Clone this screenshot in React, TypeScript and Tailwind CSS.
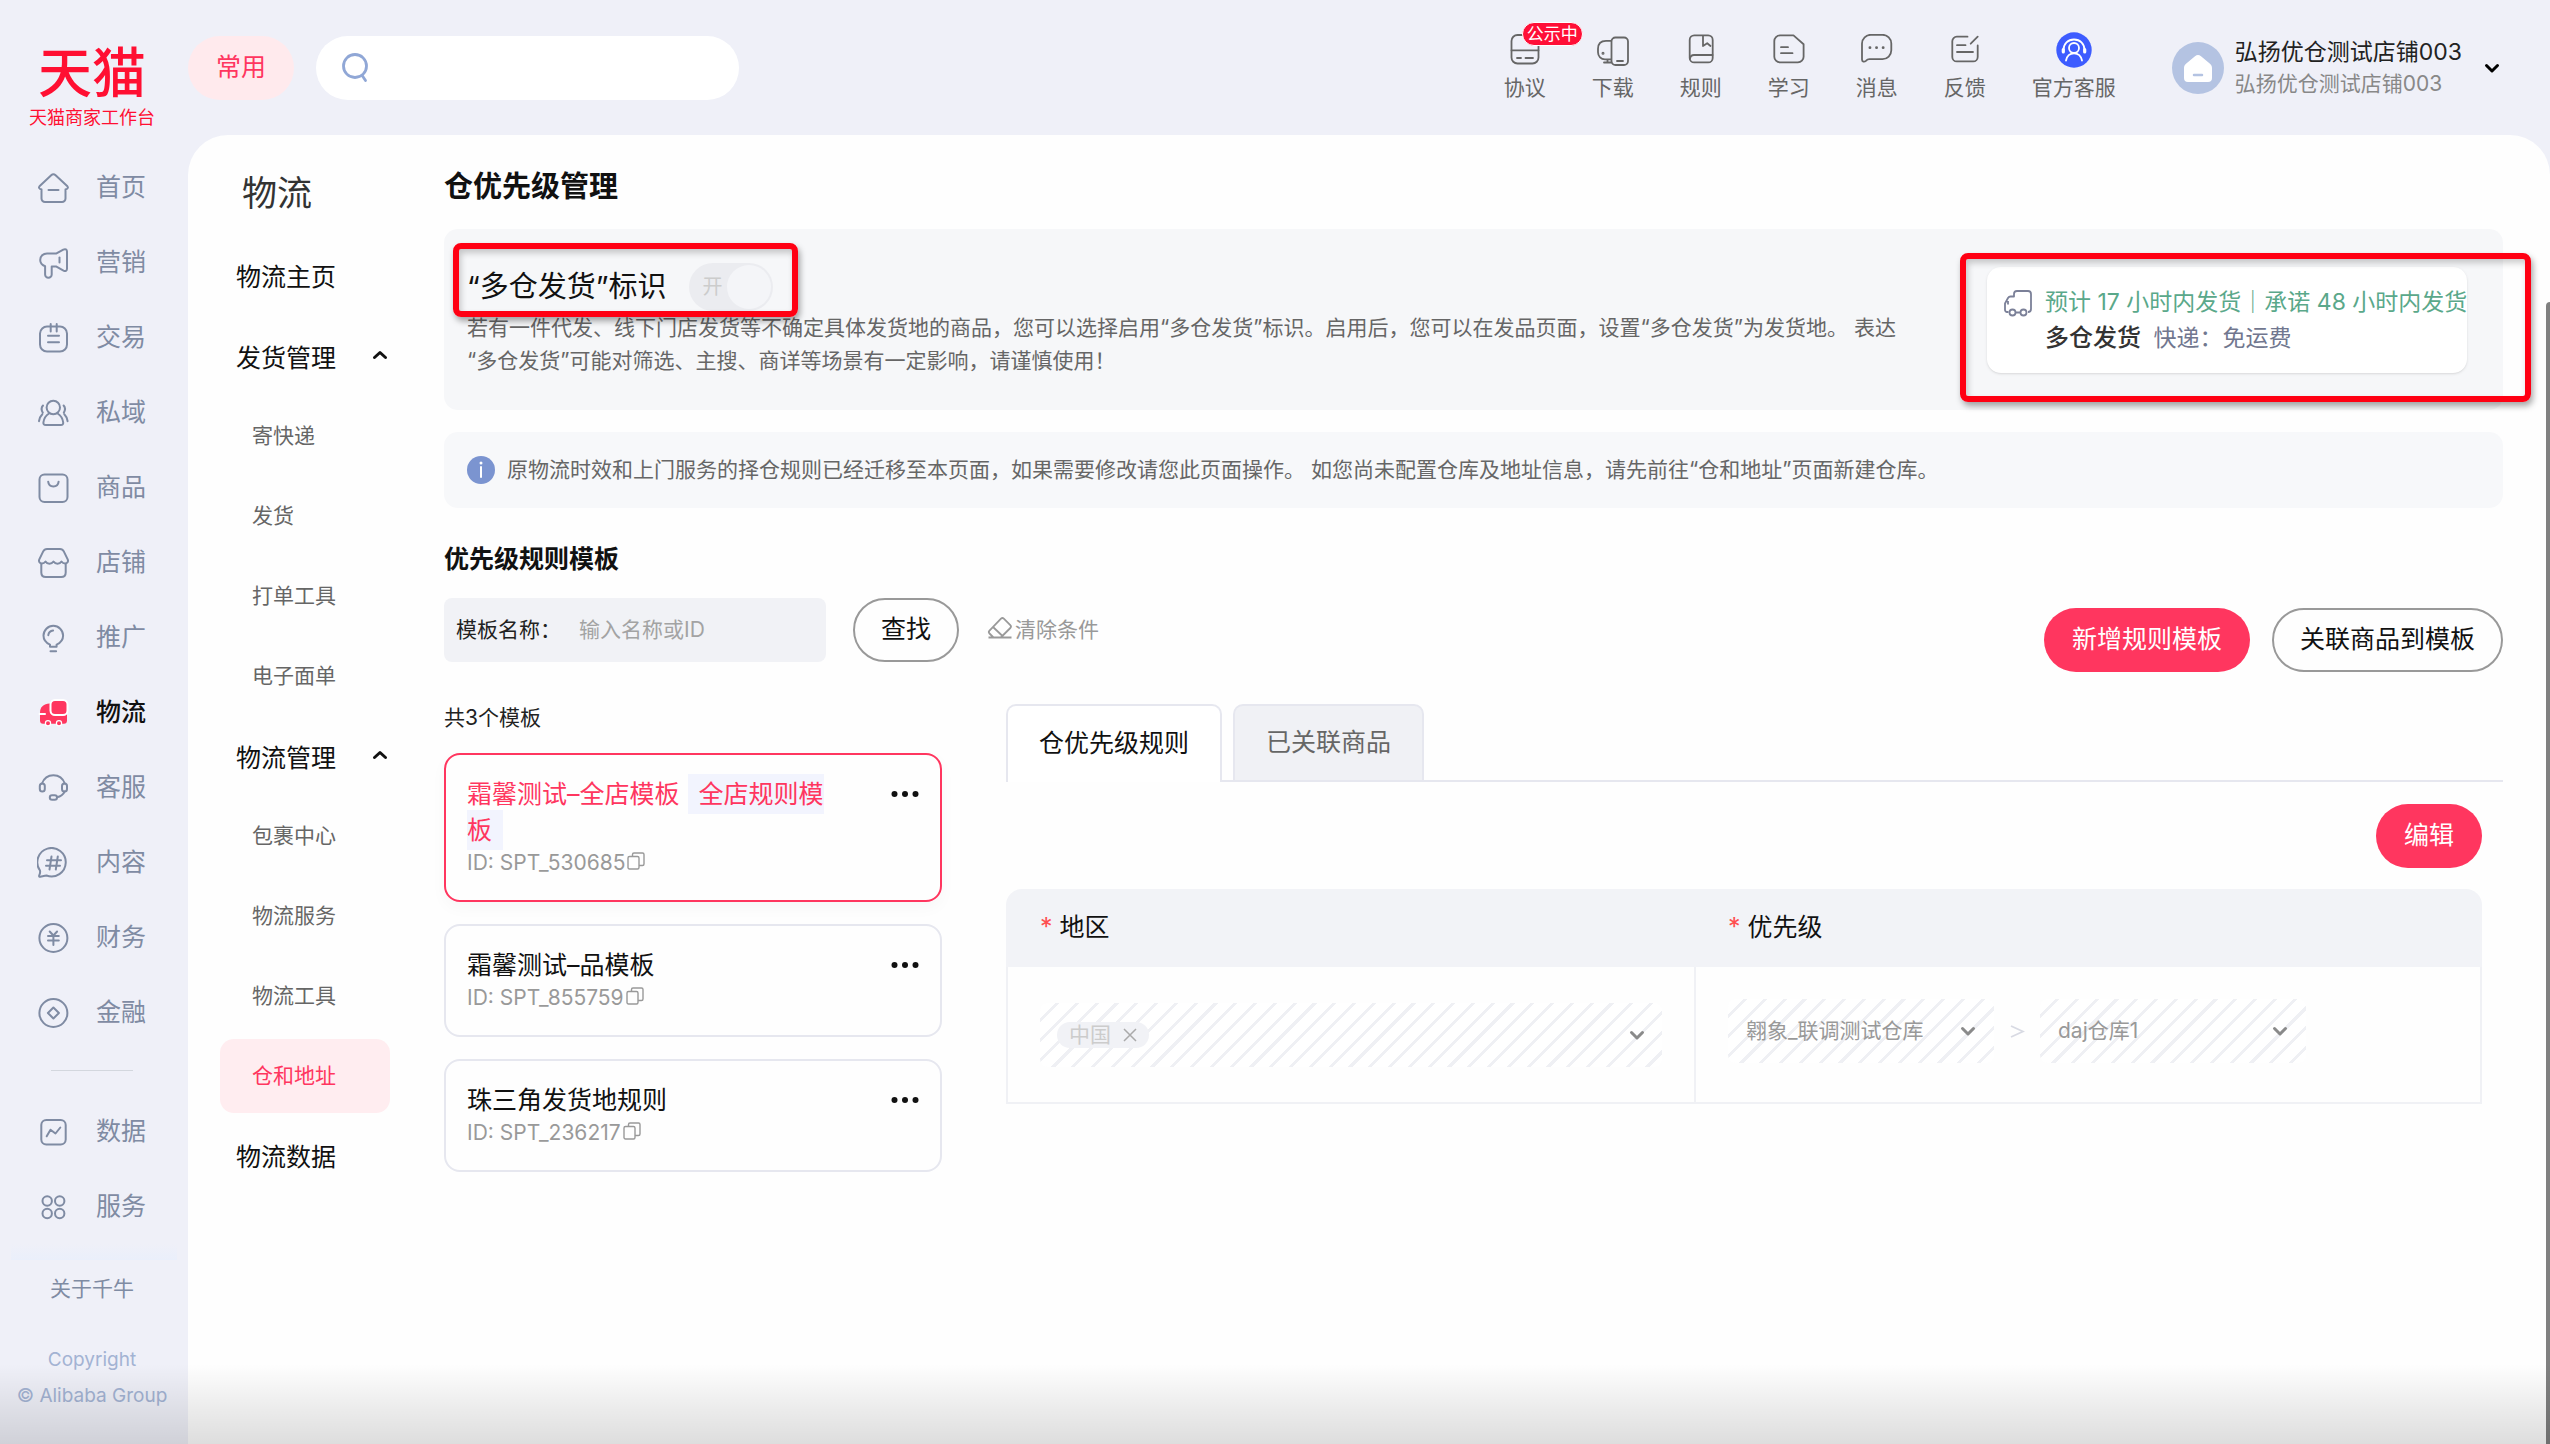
import React from "react";

type IconProps = { children: React.ReactNode; className?: string; strokeWidth?: number };

function Icon({ children, className = "size-8", strokeWidth = 2 }: IconProps) {
  return (
    <svg
      viewBox="0 0 32 32"
      fill="none"
      stroke="currentColor"
      strokeWidth={strokeWidth}
      strokeLinecap="round"
      strokeLinejoin="round"
      aria-hidden="true"
      className={`shrink-0 ${className}`}
    >
      {children}
    </svg>
  );
}

const sideItems: { label: string; icon: React.ReactNode; active?: boolean }[] = [
  {
    label: "首页",
    icon: (
      <>
        <path d="M4.5 17.5v9a3.5 3.5 0 0 0 3.5 3.500h17a3.5 3.5 0 0 0 3.500-3.500v-9l1.400-.6c1.200-.6 1.300-1.700.5-2.600L18.600 3.200c-1.400-1.300-3-1.300-4.400 0L2.500 14.300c-.8.900-.7 2 .5 2.600z" />
        <path d="M11.500 18h10" />
      </>
    ),
  },
  {
    label: "营销",
    icon: (
      <>
        <path d="M10 6.400h9.500l6.800-3.800C28.500 1.500 30 2.500 30 4.500v17.300c0 2-1.500 2.800-3.500 1.800L19 19.400h-4.300v8a3.200 3.200 0 0 1-6.600 0V19.200C5 18 3.200 15.800 3.200 13c0-3.800 3-6.600 6.800-6.600z" />
        <path d="M22.500 10.500v5" />
      </>
    ),
  },
  {
    label: "交易",
    icon: (
      <>
        <path d="M13.700 2v7.500M19.700 2v7.500M11 13.700h11M11 20.200h11" />
        <path d="M10.500 4.600h12.300A7 7 0 0 1 30 11.500v11A7 7 0 0 1 23 29.500H10A7 7 0 0 1 3 22.500v-11a7 7 0 0 1 7.500-6.900z" />
      </>
    ),
  },
  {
    label: "私域",
    icon: (
      <>
        <circle cx="16.3" cy="10.5" r="6.7" />
        <path d="M12 16.500c-3 1.800-5 5-5.600 8.800-.2 1.700.6 2.700 2.400 2.700h15c1.800 0 2.600-1 2.400-2.700-.6-3.800-2.600-7-5.600-8.800" />
        <path d="M6 8.500c-1.800 2-1.800 4.500-.2 7.200M5.300 17.200C3.500 19 2.300 21.300 2 24.200M26.600 8.500c1.800 2 1.800 4.500.2 7.200M27.300 17.200c1.800 1.800 3 4.100 3.300 7" />
      </>
    ),
  },
  {
    label: "商品",
    icon: (
      <>
        <rect x="2.5" y="2.5" width="28" height="27.5" rx="5" />
        <path d="M11.200 9.700c.3 3 2.300 4.800 5.200 4.800s4.900-1.800 5.200-4.800" />
      </>
    ),
  },
  {
    label: "店铺",
    icon: (
      <>
        <path d="M10 2h13c2 0 3 .8 3.800 2.400l3.900 8c.9 2.300-.4 4.100-2.600 4.100-1.600 0-2.600-.6-3.600-2-1.200 1.900-2.300 2.200-4 2.200s-2.800-.5-4-2.200c-1.200 1.700-2.300 2.200-4 2.200s-2.900-.3-4-2.200c-1 1.400-2 2-3.600 2-2.200 0-3.500-1.800-2.600-4.100l3.900-8C7 2.800 8 2 10 2z" />
        <path d="M4.300 17v8.500c0 2.700 1.800 4.500 4.500 4.500h15.400c2.700 0 4.500-1.800 4.500-4.500V17" />
      </>
    ),
  },
  {
    label: "推广",
    icon: (
      <>
        <path d="M13 24.800v-2.200c-3.900-1.600-6.500-4.900-6.500-9a9.800 9.800 0 0 1 19.600 0c0 4.100-2.600 7.400-6.500 9v2.200z" />
        <path d="M11.300 13.200c.3-2.700 2-4.400 4.800-4.700M13.500 29.200h5.600" />
      </>
    ),
  },
  {
    label: "物流",
    active: true,
    icon: (
      <>
        <path
          d="M12.500 6.500C7 6.500 3 10 3 15.500v8c0 2 1 3.300 3 3.300h21c2 0 3-1.300 3-3.300V14z"
          fill="currentColor"
          stroke="none"
        />
        <circle cx="11" cy="26.3" r="2.6" fill="currentColor" stroke="#fff" strokeWidth="1.2" />
        <circle cx="22" cy="26.3" r="2.6" fill="currentColor" stroke="#fff" strokeWidth="1.2" />
        <path d="M2.500 17h5.500" stroke="#fff" />
        <rect x="13.5" y="3" width="17" height="15" rx="4.5" fill="currentColor" stroke="#fff" />
      </>
    ),
  },
  {
    label: "客服",
    icon: (
      <>
        <rect x="2.8" y="11.5" width="5" height="8" rx="2.5" />
        <rect x="25" y="11.5" width="5" height="8" rx="2.5" />
        <path d="M5 11.500C7 6 11.200 3.200 16.400 3.200S25.800 6 27.800 11.500M27.700 19.500c-1.300 2.700-4 5-7.700 5.700" />
        <rect x="12.8" y="23.2" width="7.2" height="4.6" rx="2.3" />
      </>
    ),
  },
  {
    label: "内容",
    icon: (
      <>
        <path d="M3.400 29.700c-1.200.2-1.600-.6-1.100-1.600.9-1.700 1-3 .7-4.600A14.200 14.200 0 1 1 9.500 28.500c-2 .2-4 .8-6.100 1.200z" />
        <path d="M14.500 9.500l-2 13M20.800 9.500l-2 13M10 13.200h14M9 18.700h14" />
      </>
    ),
  },
  {
    label: "财务",
    icon: (
      <>
        <circle cx="16.4" cy="16" r="14" />
        <path d="M12.700 9.500l3.700 4 3.700-4M11 14h10.800M11 18.500h10.800M16.400 13.500v9.500" />
      </>
    ),
  },
  {
    label: "金融",
    icon: (
      <>
        <circle cx="16.4" cy="16" r="14" />
        <path d="M16.400 10.500l5.500 5.500-5.500 5.500-5.500-5.500z" />
      </>
    ),
  },
];

const sideExtra: { label: string; icon: React.ReactNode }[] = [
  {
    label: "数据",
    icon: (
      <>
        <rect x="4.3" y="4" width="24.4" height="24.4" rx="5" />
        <path d="M9.700 20.300l3.800-6.600 5 3.800 4.800-6" />
      </>
    ),
  },
  {
    label: "服务",
    icon: (
      <>
        <circle cx="10.2" cy="10" r="4.7" />
        <circle cx="22.7" cy="10" r="4.7" />
        <circle cx="10.2" cy="22.5" r="4.7" />
        <circle cx="22.7" cy="22.5" r="4.7" />
      </>
    ),
  },
];

const topItems: { label: string; icon: React.ReactNode; badge?: string }[] = [
  {
    label: "协议",
    badge: "公示中",
    icon: (
      <>
        <rect x="2.5" y="1" width="27" height="28.5" rx="6" />
        <path d="M2.500 16.300h27M8 24h4M16.500 24h7.500" />
      </>
    ),
  },
  {
    label: "下载",
    icon: (
      <>
        <rect x="14.5" y="3.5" width="16.5" height="27.5" rx="4" />
        <path d="M14 6.800H9c-5 0-8 3-8 8v3.500c0 4 3 7 7 7h6M10.500 25.500v3M7 28.500h7M20 27h6" />
        <circle cx="6" cy="19.3" r="0.6" />
      </>
    ),
  },
  {
    label: "规则",
    icon: (
      <>
        <rect x="4.7" y="1.4" width="23" height="27" rx="4.5" />
        <path d="M5 24.500c.4-2.400 1.800-3.500 4-3.500h18.500M18 2v10l4.200-2.800L25.500 12" />
      </>
    ),
  },
  {
    label: "学习",
    icon: (
      <>
        <path d="M7 1.400h13.500l10.100 8.800v12.500a5.700 5.700 0 0 1-5.700 5.700H7a5.700 5.700 0 0 1-5.700-5.700V7.100A5.700 5.700 0 0 1 7 1.400z" />
        <path d="M8 13.200h7M8 19.200h11.500" />
      </>
    ),
  },
  {
    label: "消息",
    icon: (
      <>
        <path d="M10 .8h11.500A8.800 8.800 0 0 1 30.300 9.600v6.700a8.800 8.800 0 0 1-8.800 8.800H8.500c-1.400 0-2.700.7-3.600 1.700-1.700 1.500-3.900 1-3.900-1.300V9.600A8.800 8.800 0 0 1 10 .8z" />
        <path d="M8.900 13.700h.1M15.500 13.700h.1M22.100 13.700h.1" strokeWidth="2.8" />
      </>
    ),
  },
  {
    label: "反馈",
    icon: (
      <path d="M18.500 2.700H7.800a4.500 4.500 0 0 0-4.500 4.500v15.700a4.500 4.500 0 0 0 4.500 4.500h16.400a4.500 4.500 0 0 0 4.500-4.500V11.500M28.700 2.700l-7 7M8 11.200h8.500M8 18h16" />
    ),
  },
];

const groups = [
  { title: "发货管理", items: ["寄快递", "发货", "打单工具", "电子面单"] },
  { title: "物流管理", items: ["包裹中心", "物流服务", "物流工具", "仓和地址"] },
];

function Chevron({ up = false, className = "" }: { up?: boolean; className?: string }) {
  return (
    <svg
      viewBox="0 0 16 16"
      fill="none"
      stroke="currentColor"
      strokeWidth="3"
      strokeLinecap="round"
      strokeLinejoin="round"
      aria-hidden="true"
      className={`size-4 shrink-0 ${className}`}
    >
      <path d={up ? "M2.500 10.500L8 5.500l5.500 5" : "M2.500 5.500L8 11l5.500-5.500"} />
    </svg>
  );
}

function CopyIcon() {
  return (
    <svg viewBox="0 0 18 18" fill="none" stroke="currentColor" strokeWidth="1.4" aria-hidden="true" className="mb-1 size-[18px]">
      <rect x="1" y="4.5" width="11" height="12.5" rx="1.5" />
      <path d="M5.500 4.500v-2A1.500 1.500 0 0 1 7 1h8.500A1.500 1.500 0 0 1 17 2.500V12a1.500 1.500 0 0 1-1.500 1.500H12" />
    </svg>
  );
}

function Sidebar() {
  return (
    <aside className="flex w-[188px] shrink-0 flex-col text-[#7f8ba3]">
      <div className="flex h-[150px] flex-col items-center pt-[42px] pr-1 text-[#ff0f32]">
        <div className="text-[54px] leading-[64px] font-medium">天猫</div>
        <div className="text-[18px] leading-6">天猫商家工作台</div>
      </div>
      <nav aria-label="主导航" className="flex flex-col">
        {sideItems.map((item) => (
          <a
            key={item.label}
            href="#"
            aria-current={item.active ? "page" : undefined}
            className="flex h-[75px] items-center gap-[27px] pl-[37px] text-[25px]"
          >
            <Icon className={item.active ? "size-8 text-[#ff365f]" : "size-8"}>{item.icon}</Icon>
            <span className={item.active ? "font-medium text-[#111]" : ""}>{item.label}</span>
          </a>
        ))}
        <div className="pr-1">
          <hr className="mx-auto mt-5 mb-[23px] w-[82px] border-[#d3d7de]" />
        </div>
        {sideExtra.map((item) => (
          <a key={item.label} href="#" className="flex h-[75px] items-center gap-[27px] pl-[37px] text-[25px]">
            <Icon>{item.icon}</Icon>
            <span>{item.label}</span>
          </a>
        ))}
      </nav>
      <div className="mx-[11px] h-4 bg-linear-to-b from-[#eff0f8] to-[#eaeffb]" />
      <a href="#" className="mt-[13px] pr-1 text-center text-[21px] leading-8">
        关于千牛
      </a>
      <p className="mt-[37px] pr-1 text-center text-[19px] leading-9 text-[#a3b3d3]">
        Copyright
        <br />© Alibaba Group
      </p>
    </aside>
  );
}

function TopBar() {
  return (
    <header className="flex h-[135px] items-center pr-[50px]">
      <button className="h-16 rounded-full bg-[#ffeaed] px-7 text-[25px] text-[#ff365f]">常用</button>
      <label className="ml-[22px] flex h-16 w-[423px] items-center gap-3 rounded-full bg-white pl-6">
        <svg viewBox="0 0 32 32" fill="none" stroke="#90a7d6" strokeWidth="2.8" strokeLinecap="round" className="size-8" aria-hidden="true">
          <circle cx="15" cy="14" r="11.5" />
          <path d="M22.500 24l3 4.500" />
        </svg>
        <input type="search" aria-label="搜索" className="min-w-0 flex-1 text-[21px] outline-none" />
      </label>
      <nav aria-label="工具" className="ml-auto flex gap-[46px] text-[21px] leading-7 text-[#666]">
        {topItems.map((item) => (
          <a key={item.label} href="#" className="relative flex flex-col items-center gap-2">
            <Icon strokeWidth={1.8}>{item.icon}</Icon>
            {item.label}
            {item.badge && (
              <span className="absolute -top-3 left-[18px] rounded-full border border-white bg-[#ff0f37] px-1 text-[17px] leading-[22px] whitespace-nowrap text-white">
                {item.badge}
              </span>
            )}
          </a>
        ))}
        <a href="#" className="flex flex-col items-center gap-2">
          <span className="flex size-8 items-center justify-center">
            <svg viewBox="0 0 36 36" fill="none" stroke="#fff" strokeWidth="1.8" strokeLinecap="round" className="size-9 shrink-0" aria-hidden="true">
              <circle cx="18" cy="18" r="17.7" fill="#3d5cff" stroke="none" />
              <path d="M7.500 18c0-6.500 4.500-10.500 10.500-10.500S28.500 11.500 28.500 18" />
              <path d="M7.300 17.500v2.500M28.700 17.500v2.500" strokeWidth="3.2" />
              <circle cx="18" cy="16" r="5" />
              <path d="M10 28.500c.9-4.500 3.900-7.200 8-7.200s7.100 2.700 8 7.200" />
            </svg>
          </span>
          官方客服
        </a>
      </nav>
      <button className="ml-14 flex items-center text-left">
        <svg viewBox="0 0 52 52" className="size-[52px]" aria-hidden="true">
          <circle cx="26" cy="26" r="26" fill="#b4c3e2" />
          <path d="M23 14.300c2-1.800 4-1.800 6 0l8.700 7.200c1.500 1.300 2.300 2.600 2.300 4.500v10a4 4 0 0 1-4 4H16a4 4 0 0 1-4-4V26c0-1.900.8-3.200 2.300-4.500z" fill="#fff" />
          <path d="M22 33h8" stroke="#b4c3e2" strokeWidth="2.5" strokeLinecap="round" />
        </svg>
        <span className="ml-[11px] flex flex-col">
          <span className="text-[23px] leading-8 text-[#222]">弘扬优仓测试店铺003</span>
          <span className="text-[21px] leading-8 text-[#888]">弘扬优仓测试店铺003</span>
        </span>
        <Chevron className="ml-[22px] text-black" />
      </button>
    </header>
  );
}

function SubMenu() {
  return (
    <nav aria-label="物流" className="w-64 shrink-0 pt-8">
      <h2 className="pl-[54px] text-[35px] leading-[52px] text-[#333]">物流</h2>
      <div className="mt-[17px] flex flex-col text-[25px] text-[#111]">
        <a href="#" className="flex h-20 items-center pt-1 pl-12">
          物流主页
        </a>
        {groups.map((group) => (
          <div key={group.title} className="flex flex-col">
            <button className="flex h-20 items-center justify-between pt-1.5 pr-14 pl-12" aria-expanded="true">
              {group.title}
              <Chevron up className="mb-2" />
            </button>
            {group.items.map((item) => (
              <a
                key={item}
                href="#"
                className={
                  item === "仓和地址"
                    ? "mx-8 my-[3px] flex h-[74px] w-[170px] items-center rounded-[14px] bg-[#ffedf0] pl-8 text-[21px] text-[#ff365f]"
                    : "mx-8 my-[3px] flex h-[74px] w-[170px] items-center pl-8 text-[21px] text-[#666]"
                }
              >
                {item}
              </a>
            ))}
          </div>
        ))}
        <a href="#" className="flex h-20 items-center pt-1 pl-12">
          物流数据
        </a>
      </div>
    </nav>
  );
}

function FlagCard() {
  return (
    <section className="relative mt-[22px] flex items-start justify-between rounded-[14px] bg-[#f6f7f9] pt-[34px] pr-9 pb-[33px] pl-[23px]">
      <div>
        <div className="flex h-12 items-center gap-[22px]">
          <span id="flag-label" className="text-[29px] text-[#111]">
            “多仓发货”标识
          </span>
          <button
            role="switch"
            aria-checked="true"
            aria-labelledby="flag-label"
            disabled
            className="flex h-12 w-[84px] items-center justify-between rounded-full bg-[#ebecf0] pr-0.5 pl-3.5 text-[20px] text-[#ccc]"
          >
            开
            <span className="size-11 rounded-full bg-[#f4f5f8]" />
          </button>
        </div>
        <p className="text-[21px] leading-[33px] text-[#666]">
          若有一件代发、线下门店发货等不确定具体发货地的商品，您可以选择启用“多仓发货”标识。启用后，您可以在发品页面，设置“多仓发货”为发货地。 表达
          <br />
          “多仓发货”可能对筛选、主搜、商详等场景有一定影响，请谨慎使用！
        </p>
      </div>
      <div className="mt-1 flex w-[480px] gap-3 overflow-hidden rounded-[14px] bg-white py-[17px] pl-4 shadow-sm">
        <svg viewBox="0 0 30 30" fill="none" stroke="#7b8098" strokeWidth="1.8" strokeLinejoin="round" className="mt-1 size-[30px] shrink-0" aria-hidden="true">
          <path d="M5.500 24H4a2 2 0 0 1-2-2v-6.500l3-5.500c.6-1 1.300-1.500 2.500-1.500H11V6a3 3 0 0 1 3-3h11a3 3 0 0 1 3 3v15a3 3 0 0 1-3 3M5 13v3.500" />
          <circle cx="9.5" cy="24.5" r="3" />
          <circle cx="20.5" cy="24.5" r="3" />
          <path d="M12.500 24.500h5" />
        </svg>
        <div className="text-[23px] leading-9 whitespace-nowrap">
          <div className="text-[#5aa88a]">预计 17 小时内发货｜承诺 48 小时内发货</div>
          <div className="text-[#71778f]">
            <span className="mr-1.5 text-[24px] font-medium text-[#333]">多仓发货</span> 快递：免运费
          </div>
        </div>
      </div>
      <div className="pointer-events-none absolute top-[14px] left-[9px] h-[74px] w-[345px] rounded-lg border-[6px] border-[#ff0013] shadow-[2px_4px_6px_rgba(0,0,0,0.35),inset_2px_4px_6px_rgba(0,0,0,0.2)]" />
      <div className="pointer-events-none absolute top-6 -right-7 h-[149px] w-[571px] rounded-lg border-[6px] border-[#ff0013] shadow-[2px_4px_6px_rgba(0,0,0,0.35),inset_2px_4px_6px_rgba(0,0,0,0.2)]" />
    </section>
  );
}

const templates = [
  { name: "霜馨测试–全店模板", tag: "全店规则模板", id: "SPT_530685" },
  { name: "霜馨测试–品模板", id: "SPT_855759" },
  { name: "珠三角发货地规则", id: "SPT_236217" },
];

function TemplateList() {
  return (
    <div className="w-[498px] shrink-0">
      <p className="text-[21px] leading-7 text-[#222]">共3个模板</p>
      <ul className="mt-[21px] flex flex-col gap-[22px]">
        {templates.map((t) => (
          <li
            key={t.id}
            className={
              t.tag
                ? "flex items-start justify-between rounded-2xl border-2 border-[#ff365f] px-[21px] pt-[21px] pb-[23px] shadow-[0_6px_16px_rgba(0,0,0,0.03)]"
                : "flex items-start justify-between rounded-2xl border-2 border-[#e6e7ef] px-[21px] pt-[21px] pb-[23px]"
            }
          >
            <div className="w-[370px]">
              <div className={t.tag ? "text-[25px] leading-9 text-[#ff365f]" : "text-[25px] leading-9 text-[#111]"}>
                {t.name}
                {t.tag && <span className="ml-2 bg-[#f2f4fe] px-[11px] py-[5px]">{t.tag}</span>}
              </div>
              <div className="relative mt-px flex items-center gap-0.5 text-[21px] leading-7 text-[#999]">
                ID: {t.id}
                <button aria-label="复制">
                  <CopyIcon />
                </button>
              </div>
            </div>
            <button aria-label="更多" className="flex h-9 items-center text-[#111]">
              <svg viewBox="0 0 28 8" fill="currentColor" className="h-2 w-7" aria-hidden="true">
                <circle cx="3.5" cy="4" r="3" />
                <circle cx="14" cy="4" r="3" />
                <circle cx="24.5" cy="4" r="3" />
              </svg>
            </button>
          </li>
        ))}
      </ul>
    </div>
  );
}

function WarehouseSelect({ label, value }: { label: string; value: string }) {
  return (
    <div className="relative flex h-16 w-[266px] items-center rounded-lg bg-[repeating-linear-gradient(135deg,#fff_0_11px,#eff0f4_11px_14px)]">
      <select aria-label={label} disabled className="h-full w-full appearance-none pr-12 pl-[18px] text-[21px] text-[#999] opacity-100">
        <option>{value}</option>
      </select>
      <Chevron className="pointer-events-none absolute right-[18px] text-[#8a8a8a]" />
    </div>
  );
}

function RulePanel() {
  return (
    <div className="min-w-0 flex-1">
      <div role="tablist" className="flex gap-[11px] border-b-2 border-[#e6e7ef] text-[25px]">
        <button role="tab" aria-selected="true" className="-mb-0.5 h-[78px] rounded-t-[10px] border-2 border-b-0 border-[#e6e7ef] bg-white px-[31px] text-[#111]">
          仓优先级规则
        </button>
        <button role="tab" aria-selected="false" className="h-[76px] rounded-t-[10px] border-2 border-b-0 border-[#e6e7ef] bg-[#f0f1f5] px-[31px] text-[#666]">
          已关联商品
        </button>
      </div>
      <div className="mt-[22px] flex flex-col items-end pr-[21px]">
        <button className="h-16 rounded-full bg-[#ff365f] px-7 text-[25px] text-white">编辑</button>
        <table className="mt-[21px] w-full table-fixed border-separate border-spacing-0">
          <thead>
            <tr className="text-left text-[25px] text-[#111]">
              <th className="h-[78px] w-[690px] rounded-tl-2xl bg-[#f2f3f7] px-[34px] font-normal">
                <span className="text-[#ff4d4f]">*</span> 地区
              </th>
              <th className="rounded-tr-2xl bg-[#f2f3f7] px-8 font-normal">
                <span className="text-[#ff4d4f]">*</span> 优先级
              </th>
            </tr>
          </thead>
          <tbody>
            <tr>
              <td className="h-[137px] border-r-2 border-b-2 border-l-2 border-[#f0f1f5] px-8 pt-9 align-top">
                <div className="flex h-16 items-center rounded-lg bg-[repeating-linear-gradient(135deg,#fff_0_11px,#eff0f4_11px_14px)] pr-[17px] pl-[17px]">
                  <span className="flex h-[26px] items-center gap-3 rounded-full bg-[#f1f2f6] px-3 text-[21px] leading-[26px] text-[#ccc]">
                    中国
                    <button disabled aria-label="移除中国">
                      <svg viewBox="0 0 14 14" stroke="#aaa" strokeWidth="1.5" className="size-3.5" aria-hidden="true">
                        <path d="M1 1l12 12M13 1L1 13" />
                      </svg>
                    </button>
                  </span>
                  <button disabled aria-label="选择地区" className="ml-auto">
                    <Chevron className="text-[#8a8a8a]" />
                  </button>
                </div>
              </td>
              <td className="border-r-2 border-b-2 border-[#f0f1f5] px-8 pt-8 align-top">
                <div className="flex items-center gap-[15px]">
                  <WarehouseSelect label="第一优先级仓库" value="翱象_联调测试仓库" />
                  <svg viewBox="0 0 16 16" fill="none" stroke="#d8dae3" strokeWidth="1.8" className="size-4" aria-hidden="true">
                    <path d="M2 3l12 5.500L2 14" />
                  </svg>
                  <WarehouseSelect label="第二优先级仓库" value="daj仓库1" />
                </div>
              </td>
            </tr>
          </tbody>
        </table>
      </div>
    </div>
  );
}

export default function App() {
  return (
    <div className="relative flex min-h-screen bg-[#eff0f8] font-[Inter,'Noto_Sans_CJK_SC',sans-serif]">
      <Sidebar />
      <div className="flex min-w-0 flex-1 flex-col">
        <TopBar />
        <div className="flex flex-1 rounded-t-[40px] bg-[#fefefe]">
          <SubMenu />
          <main className="min-w-0 flex-1 pt-8 pr-[47px]">
            <h1 className="text-[29px] leading-10 font-bold text-[#111]">仓优先级管理</h1>
            <FlagCard />
            <div className="mt-[22px] flex h-[76px] items-center gap-3 rounded-[14px] bg-[#f7f8fa] px-[23px] text-[21px] text-[#666]">
              <svg viewBox="0 0 28 28" className="size-7 shrink-0" aria-hidden="true">
                <circle cx="14" cy="14" r="14" fill="#7b94d0" />
                <path d="M14 11v10" stroke="#fff" strokeWidth="2" strokeLinecap="round" />
                <circle cx="14" cy="7" r="1.5" fill="#fff" />
              </svg>
              <p>原物流时效和上门服务的择仓规则已经迁移至本页面，如果需要修改请您此页面操作。 如您尚未配置仓库及地址信息，请先前往“仓和地址”页面新建仓库。</p>
            </div>
            <h2 className="mt-[33px] text-[25px] leading-9 font-bold text-[#111]">优先级规则模板</h2>
            <form className="mt-[21px] flex items-start">
              <label className="flex h-16 w-[382px] items-center rounded-lg bg-[#f1f2f6] px-3 text-[21px] text-[#222]">
                <span className="shrink-0">模板名称：</span>
                <input
                  type="text"
                  placeholder="输入名称或ID"
                  className="ml-[18px] min-w-0 flex-1 outline-none placeholder:text-[#a3a3a3]"
                />
              </label>
              <button type="button" className="ml-[27px] h-16 rounded-full border-2 border-[#999] px-[26px] text-[25px] text-[#111]">
                查找
              </button>
              <button type="reset" className="ml-7 flex h-16 items-center gap-0.5 text-[21px] text-[#999]">
                <svg viewBox="0 0 26 26" fill="none" stroke="currentColor" strokeWidth="1.8" strokeLinejoin="round" className="mb-1 size-[26px]" aria-hidden="true">
                  <path d="M1.500 22.500h23M6.500 22.500l-4-4a2 2 0 0 1 0-2.800L14 3.700a2 2 0 0 1 2.800 0l6.500 6.500a2 2 0 0 1 0 2.800l-9.500 9.500M6 12l9.500 9" />
                </svg>
                清除条件
              </button>
              <div className="mt-2.5 ml-auto flex gap-[22px] text-[25px]">
                <button type="button" className="h-16 rounded-full bg-[#ff365f] px-7 text-white">
                  新增规则模板
                </button>
                <button type="button" className="h-16 rounded-full border-2 border-[#999] px-[26px] text-[#111]">
                  关联商品到模板
                </button>
              </div>
            </form>
            <div className="mt-8 flex gap-16">
              <TemplateList />
              <RulePanel />
            </div>
          </main>
        </div>
      </div>
      <div className="pointer-events-none absolute top-[302px] right-0 bottom-0 w-1 rounded-tl bg-[#808080]" />
      <div className="pointer-events-none absolute inset-x-0 bottom-0 h-20 bg-linear-to-b from-transparent to-black/13" />
    </div>
  );
}
